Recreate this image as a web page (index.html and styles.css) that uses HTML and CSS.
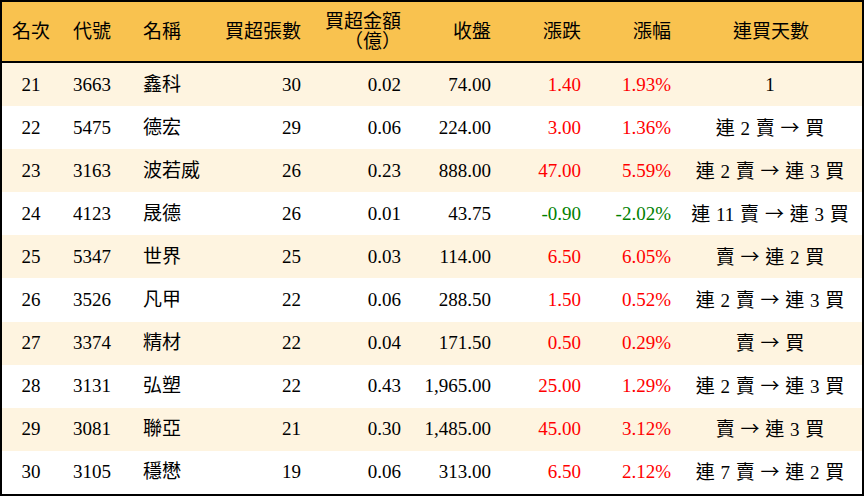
FILE: index.html
```html
<!DOCTYPE html>
<html lang="zh-Hant">
<head>
<meta charset="utf-8">
<title>買超排行</title>
<link rel="stylesheet" href="styles.css">
</head>
<body>
<div class="frame">
<table class="rank">
  <colgroup>
    <col class="c1"><col class="c2"><col class="c3"><col class="c4"><col class="c5">
    <col class="c6"><col class="c7"><col class="c8"><col class="c9">
  </colgroup>
  <thead>
    <tr>
      <th class="ctr">名次</th>
      <th class="lft">代號</th>
      <th class="lft">名稱</th>
      <th class="rgt">買超張數</th>
      <th class="rgt">買超金額<br>（億）</th>
      <th class="rgt">收盤</th>
      <th class="rgt">漲跌</th>
      <th class="rgt">漲幅</th>
      <th class="ctr">連買天數</th>
    </tr>
  </thead>
  <tbody>
    <tr class="odd"><td class="ctr">21</td><td class="lft">3663</td><td class="lft">鑫科</td><td class="rgt">30</td><td class="rgt">0.02</td><td class="rgt">74.00</td><td class="rgt up">1.40</td><td class="rgt up">1.93%</td><td class="ctr streak">1</td></tr>
    <tr><td class="ctr">22</td><td class="lft">5475</td><td class="lft">德宏</td><td class="rgt">29</td><td class="rgt">0.06</td><td class="rgt">224.00</td><td class="rgt up">3.00</td><td class="rgt up">1.36%</td><td class="ctr streak">連 2 賣 <span class="arr">→</span> 買</td></tr>
    <tr class="odd"><td class="ctr">23</td><td class="lft">3163</td><td class="lft">波若威</td><td class="rgt">26</td><td class="rgt">0.23</td><td class="rgt">888.00</td><td class="rgt up">47.00</td><td class="rgt up">5.59%</td><td class="ctr streak">連 2 賣 <span class="arr">→</span> 連 3 買</td></tr>
    <tr><td class="ctr">24</td><td class="lft">4123</td><td class="lft">晟德</td><td class="rgt">26</td><td class="rgt">0.01</td><td class="rgt">43.75</td><td class="rgt down">-0.90</td><td class="rgt down">-2.02%</td><td class="ctr streak">連 11 賣 <span class="arr">→</span> 連 3 買</td></tr>
    <tr class="odd"><td class="ctr">25</td><td class="lft">5347</td><td class="lft">世界</td><td class="rgt">25</td><td class="rgt">0.03</td><td class="rgt">114.00</td><td class="rgt up">6.50</td><td class="rgt up">6.05%</td><td class="ctr streak">賣 <span class="arr">→</span> 連 2 買</td></tr>
    <tr><td class="ctr">26</td><td class="lft">3526</td><td class="lft">凡甲</td><td class="rgt">22</td><td class="rgt">0.06</td><td class="rgt">288.50</td><td class="rgt up">1.50</td><td class="rgt up">0.52%</td><td class="ctr streak">連 2 賣 <span class="arr">→</span> 連 3 買</td></tr>
    <tr class="odd"><td class="ctr">27</td><td class="lft">3374</td><td class="lft">精材</td><td class="rgt">22</td><td class="rgt">0.04</td><td class="rgt">171.50</td><td class="rgt up">0.50</td><td class="rgt up">0.29%</td><td class="ctr streak">賣 <span class="arr">→</span> 買</td></tr>
    <tr><td class="ctr">28</td><td class="lft">3131</td><td class="lft">弘塑</td><td class="rgt">22</td><td class="rgt">0.43</td><td class="rgt">1,965.00</td><td class="rgt up">25.00</td><td class="rgt up">1.29%</td><td class="ctr streak">連 2 賣 <span class="arr">→</span> 連 3 買</td></tr>
    <tr class="odd"><td class="ctr">29</td><td class="lft">3081</td><td class="lft">聯亞</td><td class="rgt">21</td><td class="rgt">0.30</td><td class="rgt">1,485.00</td><td class="rgt up">45.00</td><td class="rgt up">3.12%</td><td class="ctr streak">賣 <span class="arr">→</span> 連 3 買</td></tr>
    <tr><td class="ctr">30</td><td class="lft">3105</td><td class="lft">穩懋</td><td class="rgt">19</td><td class="rgt">0.06</td><td class="rgt">313.00</td><td class="rgt up">6.50</td><td class="rgt up">2.12%</td><td class="ctr streak">連 7 賣 <span class="arr">→</span> 連 2 買</td></tr>
  </tbody>
</table>
</div>
</body>
</html>
```
FILE: styles.css
```css
html, body {
  margin: 0;
  padding: 0;
  background: #ffffff;
}
.frame {
  width: 864px;
  height: 496px;
  box-sizing: border-box;
  border: 2px solid #000;
  overflow: hidden;
}
.rank {
  width: 860px;
  border-collapse: separate;
  border-spacing: 0;
  table-layout: fixed;
  font-family: "Liberation Serif", "Noto Sans CJK TC", serif;
  font-size: 19px;
  color: #000;
}
.c1 { width: 58px; }
.c2 { width: 70px; }
.c3 { width: 80px; }
.c4 { width: 100px; }
.c5 { width: 100px; }
.c6 { width: 90px; }
.c7 { width: 90px; }
.c8 { width: 90px; }
.c9 { width: 182px; }
.rank th {
  background: #f9c24f;
  font-weight: normal;
  height: 59px;
  line-height: 20px;
  border-bottom: 2px solid #000;
  padding: 0;
}
.rank td {
  height: 43.1px;
  line-height: 22px;
  padding: 0;
}
.rank tbody tr.odd td {
  background: #fef4e0;
}
.ctr { text-align: center; }
.lft { text-align: left; padding-left: 13px !important; }
.rgt { text-align: right; padding-right: 9px !important; }
.streak { word-spacing: 1px; padding-right: 2px !important; }
.arr {
  font-family: "Noto Sans CJK TC", sans-serif;
  font-size: 19px;
}
.up { color: #ff0000; }
.down { color: #008000; }
```
